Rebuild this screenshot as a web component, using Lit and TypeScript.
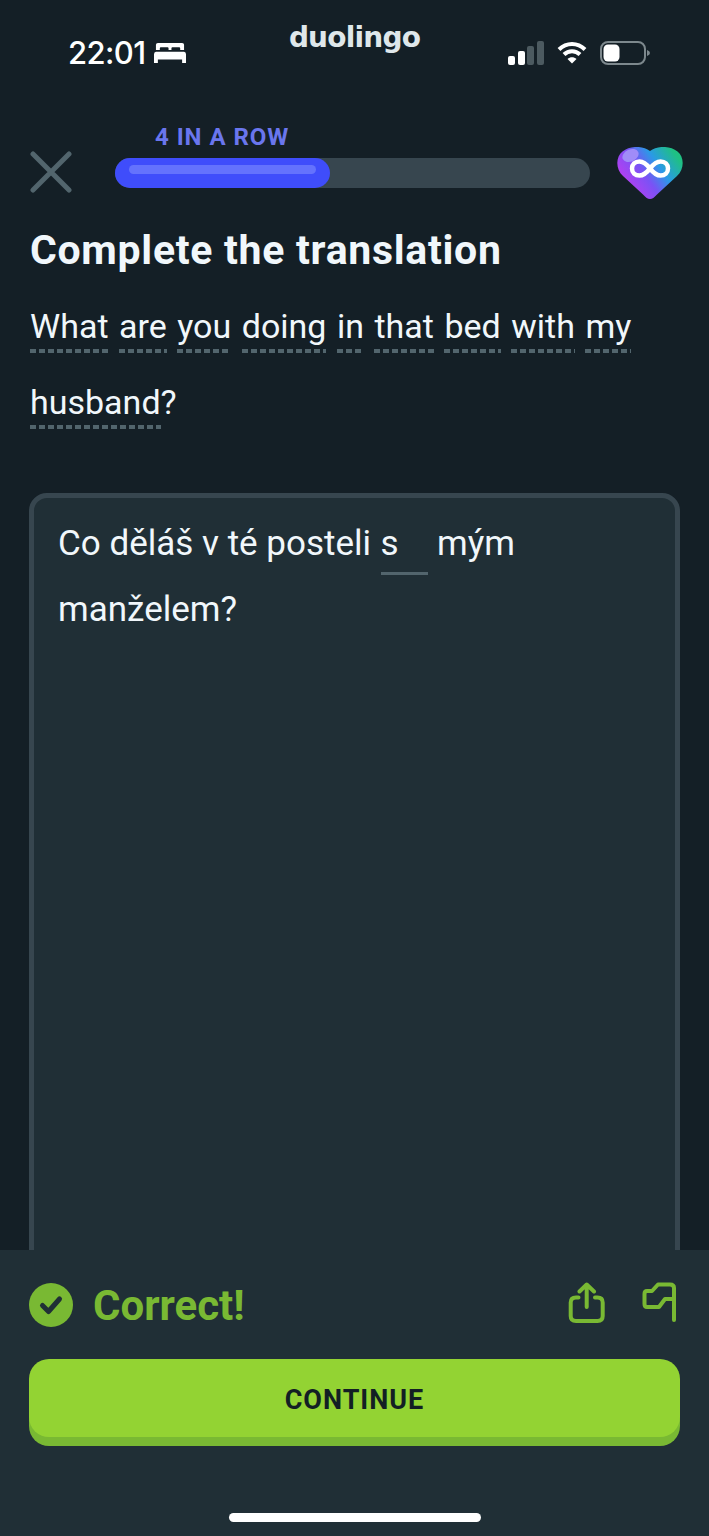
import { LitElement, html, css, svg } from 'lit';
import { customElement } from 'lit/decorators.js';

const PROMPT = 'What are you doing in that bed with my'.split(' ');

const heart = svg`
  <defs>
    <linearGradient id="hg" x1="0.05" y1="0.75" x2="0.95" y2="0.25">
      <stop offset="0" stop-color="#c53af0" />
      <stop offset="0.42" stop-color="#7a52f5" />
      <stop offset="0.68" stop-color="#2a9ae6" />
      <stop offset="1" stop-color="#1fc083" />
    </linearGradient>
  </defs>
  <path d="M33 52 C30.500 52 29 50.500 26 47.500 L6 29 C-1.500 22 -1.500 10 5.500 4.500 C13 -1.500 26 -1.500 33 4 C40 -1.500 53 -1.500 60.500 4.500 C67.500 10 67.500 22 60 29 L40 47.500 C37 50.500 35.500 52 33 52 Z" fill="url(#hg)" />
  <ellipse cx="13.500" cy="8.500" rx="8.500" ry="6" fill="#a08cf8" transform="rotate(-25 13.500 8.500)" />
  <path d="M33 21.500 C29.500 17 26.500 14.500 22.500 14.500 C18 14.500 15 17.500 15 21.500 C15 25.500 18 28.500 22.500 28.500 C26.500 28.500 29.500 26 33 21.500 C36.500 17 39.500 14.500 43.500 14.500 C48 14.500 51 17.500 51 21.500 C51 25.500 48 28.500 43.500 28.500 C39.500 28.500 36.500 26 33 21.500 Z" fill="none" stroke="#fff" stroke-width="4.500" />
`;

@customElement('app-root')
export class AppRoot extends LitElement {
  static styles = css`
    :host {
      display: flex;
      flex-direction: column;
      height: 1536px;
      background: #141f26;
      font-family: Roboto, "Noto Sans", sans-serif;
      color: #f1f7fb;
      overflow: hidden;
    }
    .status {
      display: grid;
      grid-template-columns: 1fr auto 1fr;
      height: 115px;
      padding: 0 59px;
      box-sizing: border-box;
      flex: none;
    }
    .left {
      display: flex;
      align-items: center;
      gap: 9px;
      height: 104px;
      padding-left: 9px;
      font-family: Inter, sans-serif;
      font-size: 31px;
      font-weight: 500;
      letter-spacing: -0.6px;
      color: #fff;
    }
    .logo {
      padding-top: 19px;
      font-family: "DejaVu Sans", sans-serif;
      font-size: 28px;
      line-height: 38px;
      font-weight: 700;
      letter-spacing: -0.8px;
      color: #dfe7ea;
    }
    .right {
      display: flex;
      align-items: center;
      justify-content: flex-end;
      gap: 13px;
      height: 105px;
    }
    .progress {
      display: flex;
      align-items: flex-end;
      height: 78px;
      padding: 0 26px 0 30px;
      flex: none;
    }
    .close {
      display: block;
    }
    .track-wrap {
      width: 475px;
      margin: 0 27px 0 43px;
      padding-bottom: 5px;
    }
    .streak {
      margin-left: 40px;
      margin-bottom: 6px;
      font-size: 24px;
      line-height: 30px;
      font-weight: 700;
      letter-spacing: 0.95px;
      color: #6a76ee;
    }
    .track {
      display: flex;
      height: 30px;
      border-radius: 15px;
      background: #37464f;
    }
    .fill {
      box-sizing: border-box;
      width: 215px;
      padding: 7px 14px;
      border-radius: 15px;
      background: #3f4dfb;
    }
    .shine {
      height: 9px;
      border-radius: 5px;
      background: #6472fd;
    }
    .heart {
      display: block;
      margin-bottom: -6px;
    }
    .content {
      flex: 1;
      min-height: 0;
      display: flex;
      flex-direction: column;
      padding: 32px 29px 0;
      overflow: hidden;
    }
    h1 {
      margin: 0;
      padding-left: 1px;
      font-size: 41px;
      line-height: 50px;
      font-weight: 700;
      letter-spacing: 0.7px;
    }
    .prompt {
      display: flex;
      flex-wrap: wrap;
      column-gap: 10.5px;
      row-gap: 28px;
      margin-top: 30px;
      padding-left: 1px;
      font-size: 34px;
      line-height: 42px;
    }
    .word {
      display: inline-block;
      padding-bottom: 6px;
      background: repeating-linear-gradient(90deg, #52656d 0 6px, transparent 6px 9px) left bottom / 100% 4px no-repeat;
    }
    .card {
      flex: 1;
      margin-top: 64px;
      margin-bottom: -40px;
      box-sizing: border-box;
      padding: 22px 24px;
      border: 5px solid #37464f;
      border-radius: 18px;
      background: #202f36;
      font-size: 35px;
      line-height: 48px;
    }
    .line {
      display: flex;
      align-items: flex-start;
      gap: 9.5px;
    }
    .line + .line {
      margin-top: 11px;
    }
    .blank {
      box-sizing: border-box;
      width: 47px;
      height: 55px;
      border-bottom: 3px solid #52656d;
    }
    footer {
      flex: none;
      box-sizing: border-box;
      height: 286px;
      padding: 33px 29px 0;
      background: #202f36;
    }
    .result {
      display: flex;
      align-items: center;
      height: 44px;
    }
    .correct {
      flex: 1;
      margin-left: 20px;
      font-size: 42px;
      font-weight: 700;
      color: #79b933;
    }
    .actions {
      display: flex;
      gap: 36px;
      align-items: flex-start;
      margin-bottom: 4px;
      padding-right: 4px;
    }
    .continue {
      display: flex;
      align-items: center;
      justify-content: center;
      box-sizing: border-box;
      height: 78px;
      margin-top: 32px;
      padding-top: 3px;
      border-radius: 20px;
      background: #93d333;
      box-shadow: 0 9px 0 #79b933;
      color: #131f24;
      font-size: 27px;
      font-weight: 700;
      letter-spacing: 1px;
    }
    .home {
      width: 252px;
      height: 9px;
      margin: 76px auto 0;
      border-radius: 5px;
      background: #fff;
    }
  `;

  render() {
    return html`
      <div class="status">
        <div class="left">
          <span>22:01</span>
          <svg width="32" height="21" viewBox="0 0 33 24" preserveAspectRatio="none" fill="#fff">
            <path d="M4 1 H29 Q31 1 31 3 V9 H27 V7 Q27 6 26 6 H19 Q18 6 18 7 V9 H15 V7 Q15 6 14 6 H7 Q6 6 6 7 V9 H2 V3 Q2 1 4 1 Z" />
            <path d="M2 11 H31 Q33 11 33 14 V24 H29 V20 H4 V24 H0 V14 Q0 11 2 11 Z" />
          </svg>
        </div>
        <div class="logo">duolingo</div>
        <div class="right">
          <svg width="36" height="24" viewBox="0 0 36 24">
            <rect x="0" y="15" width="7" height="9" rx="2" fill="#fff" />
            <rect x="10" y="10" width="7" height="14" rx="2" fill="#fff" />
            <rect x="19" y="5" width="7" height="19" rx="2" fill="#4c5a60" />
            <rect x="29" y="0" width="7" height="24" rx="2" fill="#4c5a60" />
          </svg>
          <svg width="30" height="23" viewBox="0 0 30 23" fill="none" stroke="#fff" stroke-width="4">
            <path d="M2 8.500 C9.500 1 20.500 1 28 8.500" />
            <path d="M7 13.500 C11.500 9 18.500 9 23 13.500" />
            <path d="M15 22.500 L10.500 18 C13 15.500 17 15.500 19.500 18 Z" fill="#fff" stroke="none" />
          </svg>
          <svg width="50" height="24" viewBox="0 0 50 24">
            <rect x="1" y="1" width="44" height="22" rx="7" fill="none" stroke="#7d888d" stroke-width="2" />
            <rect x="3.500" y="3.500" width="16" height="17" rx="4.500" fill="#fff" />
            <path d="M47 9 Q50 10 50 12 Q50 14 47 15 Z" fill="#7d888d" />
          </svg>
        </div>
      </div>

      <div class="progress">
        <svg class="close" width="42" height="42" viewBox="0 0 42 42" fill="none" stroke="#52656d" stroke-width="5" stroke-linecap="round">
          <path d="M3 3 L39 39 M39 3 L3 39" />
        </svg>
        <div class="track-wrap">
          <div class="streak">4 IN A ROW</div>
          <div class="track">
            <div class="fill"><div class="shine"></div></div>
          </div>
        </div>
        <svg class="heart" width="66" height="52" viewBox="0 0 66 52">${heart}</svg>
      </div>

      <div class="content">
        <h1>Complete the translation</h1>
        <div class="prompt">
          ${PROMPT.map((w) => html`<span class="word">${w}</span>`)}
          <span><span class="word">husband</span>?</span>
        </div>
        <div class="card">
          <div class="line">
            <span>Co děláš v té posteli</span>
            <span class="blank">s</span>
            <span>mým</span>
          </div>
          <div class="line"><span>manželem?</span></div>
        </div>
      </div>

      <footer>
        <div class="result">
          <svg width="44" height="44" viewBox="0 0 44 44">
            <circle cx="22" cy="22" r="22" fill="#79b933" />
            <path d="M13.500 22.500 L19.500 28.500 L30.500 16" fill="none" stroke="#202f36" stroke-width="5" stroke-linecap="round" stroke-linejoin="round" />
          </svg>
          <span class="correct">Correct!</span>
          <div class="actions">
            <svg width="38" height="42" viewBox="0 0 38 42" fill="none" stroke="#79b933" stroke-width="4" stroke-linecap="round" stroke-linejoin="round">
              <path d="M18.700 25 V3 M11.500 9.500 L18.700 2.500 L26 9.500" />
              <path d="M10.500 15.500 H8 Q2.700 15.500 2.700 20.500 V34 Q2.700 39 8 39 H29.500 Q34.700 39 34.700 34 V20.500 Q34.700 15.500 29.500 15.500 H27" />
            </svg>
            <svg width="34" height="42" viewBox="0 0 34 42" fill="none" stroke="#79b933" stroke-width="4" stroke-linecap="round" stroke-linejoin="round">
              <path d="M32 38 V6 Q32 2.500 28 2.500 H16 L10 9 H5 Q2.500 9 2.500 12 V22 Q2.500 25 5 25 H17 L23 17 H32" />
            </svg>
          </div>
        </div>
        <div class="continue">CONTINUE</div>
        <div class="home"></div>
      </footer>
    `;
  }
}
